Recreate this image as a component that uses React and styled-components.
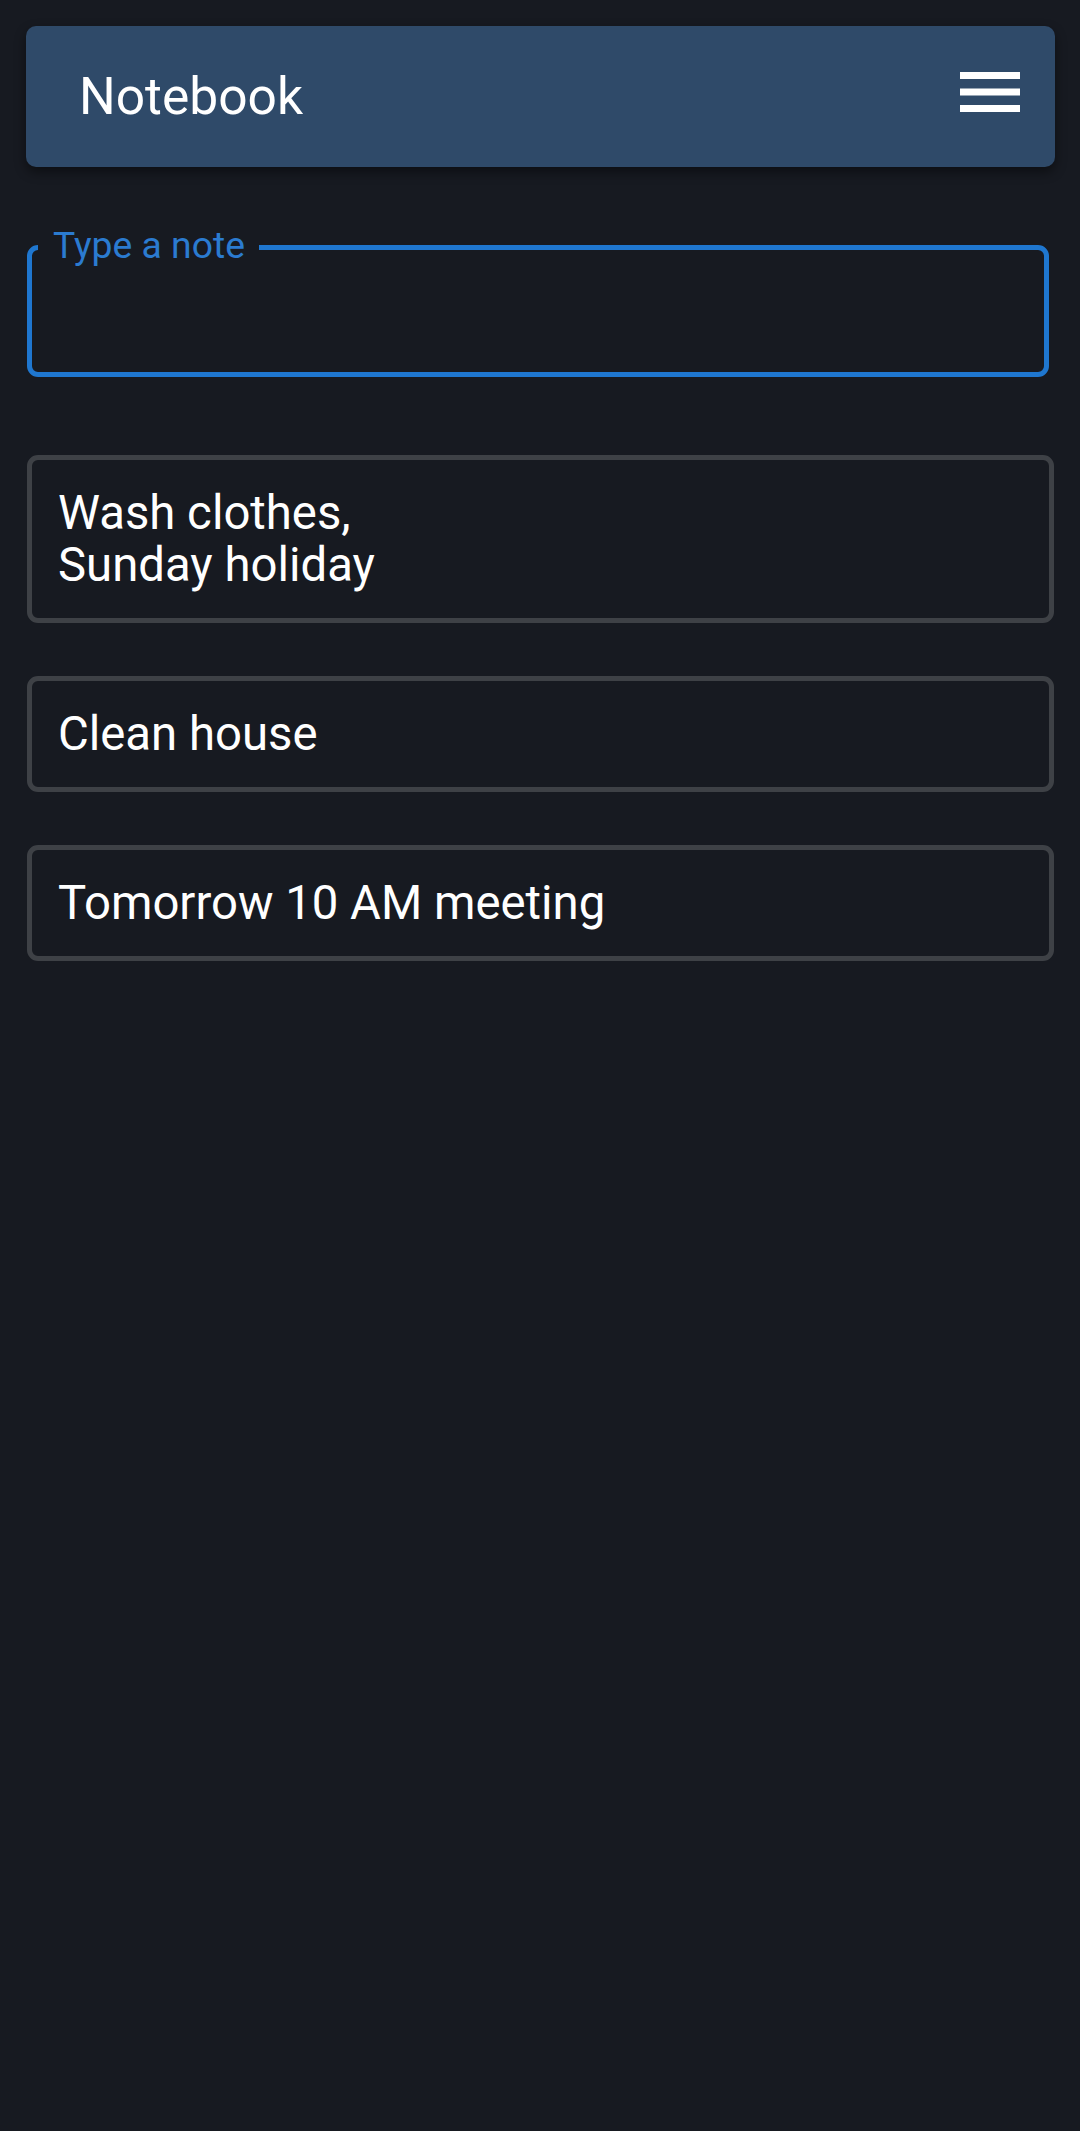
import React from "react";
import styled, { createGlobalStyle } from "styled-components";

const Global = createGlobalStyle`
  html, body {
    margin: 0;
    padding: 0;
    background: #171a21;
  }
  body {
    font-family: Roboto, "Noto Sans", "Liberation Sans", sans-serif;
    color: #ffffff;
  }
  * { box-sizing: border-box; }
`;

const Page = styled.div`
  min-height: 2131px;
  padding: 26px 25px 0 26px;
  display: flex;
  flex-direction: column;
`;

const Header = styled.header`
  height: 141px;
  background: #2f4a69;
  border-radius: 10px;
  box-shadow: 0 5px 12px rgba(0, 0, 0, 0.45);
  display: flex;
  align-items: center;
  justify-content: space-between;
  padding: 0 35px 0 53px;
`;

const Title = styled.h1`
  margin: 0;
  font-size: 51.5px;
  font-weight: 400;
  color: #ffffff;
  line-height: 1;
`;

const MenuButton = styled.button`
  border: 0;
  background: transparent;
  padding: 0;
  margin: 0 0 9px 0;
  width: 60px;
  height: 40px;
  display: flex;
  cursor: pointer;
`;

const Field = styled.fieldset`
  margin: 60px 6px 0 1px;
  padding: 0;
  border: 5px solid #1f77d0;
  border-radius: 11px;
  min-width: 0;
`;

const Legend = styled.legend`
  margin-left: 6px;
  padding: 0 14px 4px 15px;
  font-size: 37.3px;
  line-height: 37px;
  color: #2b7bd0;
`;

const NoteInput = styled.input`
  display: block;
  width: 100%;
  height: 104px;
  border: 0;
  outline: none;
  background: transparent;
  color: #ffffff;
  font-family: inherit;
  font-size: 47px;
  padding: 0 26px;
`;

const List = styled.div`
  display: flex;
  flex-direction: column;
  gap: 53px;
  margin: 78px 1px 0 1px;
`;

const Card = styled.div`
  border: 5px solid #3e4146;
  border-radius: 11px;
  padding: 27px 26px;
  font-size: 47.3px;
  line-height: 52px;
  color: #ffffff;
  white-space: pre-line;
`;

const notes = [
  "Wash clothes,\nSunday holiday",
  "Clean house",
  "Tomorrow 10 AM meeting",
];

export default function App() {
  return (
    <>
      <Global />
      <Page>
        <Header>
          <Title>Notebook</Title>
          <MenuButton aria-label="menu">
            <svg width="60" height="40" viewBox="0 0 60 40">
              <rect x="0" y="0" width="60" height="7" fill="#ffffff" />
              <rect x="0" y="16.5" width="60" height="7" fill="#ffffff" />
              <rect x="0" y="33" width="60" height="7" fill="#ffffff" />
            </svg>
          </MenuButton>
        </Header>
        <Field>
          <Legend>Type a note</Legend>
          <NoteInput />
        </Field>
        <List>
          {notes.map((n) => (
            <Card key={n}>{n}</Card>
          ))}
        </List>
      </Page>
    </>
  );
}
